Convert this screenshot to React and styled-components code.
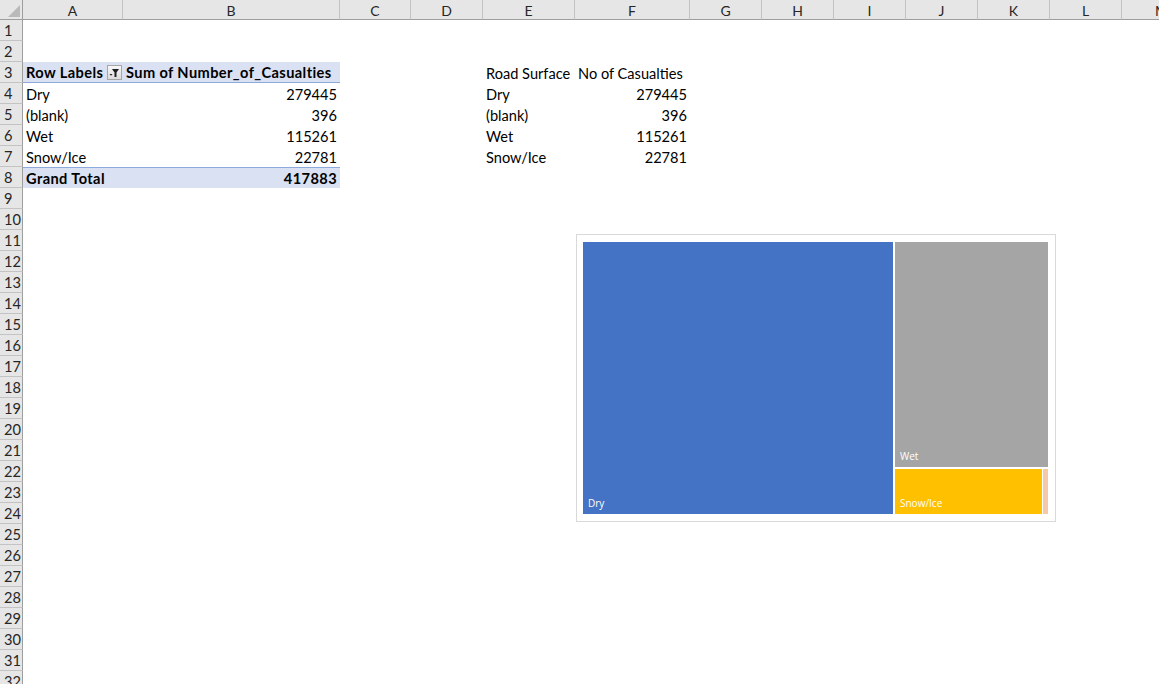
import React from "react";
import styled, { createGlobalStyle, css } from "styled-components";

const GlobalStyle = createGlobalStyle`
    html, body {
        margin: 0;
        padding: 0;
        background: #ffffff;
        overflow: hidden;
    }
    body {
        font-family: Lato, "Liberation Sans", sans-serif;
    }
`;

const COLS = ["A", "B", "C", "D", "E", "F", "G", "H", "I", "J", "K", "L", "M"];
const ROW_COUNT = 33;

const Page = styled.div`
    position: relative;
    width: 1159px;
    height: 684px;
    overflow: hidden;
`;

const Sheet = styled.div`
    display: grid;
    grid-template-columns: 23px 100px 217px 71px 72px 92px 115px 72px 72px 72px 72px 72px 72px 80px;
    grid-template-rows: 20px;
    grid-auto-rows: 21px;
    font-size: 14.6px;
    color: #000;
`;

const Corner = styled.div`
    position: relative;
    background: #e6e6e6;
    border-right: 1px solid #9e9e9e;
    border-bottom: 1px solid #9e9e9e;
    box-sizing: border-box;

    &::after {
        content: "";
        position: absolute;
        right: 2px;
        bottom: 2px;
        width: 0;
        height: 0;
        border-left: 12px solid transparent;
        border-bottom: 12px solid #b9b9b9;
    }
`;

const ColHead = styled.div`
    display: flex;
    align-items: center;
    justify-content: center;
    background: #e6e6e6;
    border-right: 1px solid #c3c3c3;
    border-bottom: 1px solid #9e9e9e;
    box-sizing: border-box;
    font-size: 14px;
    color: #262626;
    padding-top: 1px;
`;

const RowHead = styled.div`
    display: flex;
    align-items: center;
    padding-left: 4px;
    background: #e6e6e6;
    border-right: 1px solid #9e9e9e;
    border-bottom: 1px solid #c3c3c3;
    box-sizing: border-box;
    font-size: 14.6px;
    color: #262626;
`;

const Cell = styled.div`
    display: flex;
    align-items: center;
    justify-content: ${(p) => (p.$align === "right" ? "flex-end" : "space-between")};
    padding: 1px 3px 0 3px;
    box-sizing: border-box;
    white-space: nowrap;
    overflow: visible;
    font-weight: ${(p) => (p.$bold ? 700 : 400)};
    letter-spacing: ${(p) => (p.$bold ? "0.4px" : "0")};
    ${(p) =>
        p.$variant === "pivotHead" &&
        css`
            background: #d9e1f2;
            border-bottom: 1px solid #8ea9db;
        `}
    ${(p) =>
        p.$variant === "pivotTotal" &&
        css`
            background: #d9e1f2;
            border-top: 1px solid #8ea9db;
        `}
`;

const FilterButton = styled.span`
    display: inline-flex;
    align-items: center;
    justify-content: center;
    width: 15px;
    height: 15px;
    margin-right: -2px;
    box-sizing: border-box;
    border: 1px solid #a6a6a6;
    background: linear-gradient(#f7f7f7, #dcdcdc);
`;

const Chart = styled.div`
    position: absolute;
    left: 576px;
    top: 234px;
    width: 480px;
    height: 288px;
    box-sizing: border-box;
    border: 1px solid #d9d9d9;
    background: #ffffff;
    padding: 7px 8px 7px 6px;
    display: flex;
`;

const Plot = styled.div`
    flex: 1;
    display: flex;
    gap: 2px;
`;

const Side = styled.div`
    width: 153px;
    display: flex;
    flex-direction: column;
    gap: 2px;
`;

const Tile = styled.div`
    display: flex;
    align-items: flex-end;
    box-sizing: border-box;
    padding: 0 0 5px 5px;
    background: ${(p) => p.$color};
    width: ${(p) => (p.$w ? `${p.$w}px` : "auto")};
    flex: ${(p) => (p.$grow ? 1 : "none")};
    color: #ffffff;
    font-family: "Open Sans", "Noto Sans", sans-serif;
    font-size: 10px;
    line-height: 12px;
`;

const SnowRow = styled.div`
    display: flex;
    gap: 1px;
    height: 45px;
`;

const FunnelIcon = () => (
    <svg width="11" height="11" viewBox="0 0 11 11">
        <path d="M3 2h7L7.5 5.5V10H5.5V5.5Z" fill="#1f1f1f" />
        <path d="M0.5 7h3L2 8.8Z" fill="#1f1f1f" />
    </svg>
);

const cells = {
    A3: { text: "Row Labels", bold: true, variant: "pivotHead", filter: true },
    B3: { text: "Sum of Number_of_Casualties", bold: true, variant: "pivotHead" },
    A4: { text: "Dry" },
    B4: { text: "279445", align: "right" },
    A5: { text: "(blank)" },
    B5: { text: "396", align: "right" },
    A6: { text: "Wet" },
    B6: { text: "115261", align: "right" },
    A7: { text: "Snow/Ice" },
    B7: { text: "22781", align: "right" },
    A8: { text: "Grand Total", bold: true, variant: "pivotTotal" },
    B8: { text: "417883", bold: true, align: "right", variant: "pivotTotal" },
    E3: { text: "Road Surface" },
    F3: { text: "No of Casualties" },
    E4: { text: "Dry" },
    F4: { text: "279445", align: "right" },
    E5: { text: "(blank)" },
    F5: { text: "396", align: "right" },
    E6: { text: "Wet" },
    F6: { text: "115261", align: "right" },
    E7: { text: "Snow/Ice" },
    F7: { text: "22781", align: "right" },
};

const App = () => {
    const rows = [];
    for (let r = 1; r <= ROW_COUNT; r++) {
        rows.push(<RowHead key={`h${r}`}>{r}</RowHead>);
        COLS.forEach((c) => {
            const d = cells[`${c}${r}`];
            rows.push(
                <Cell
                    key={`${c}${r}`}
                    $align={d?.align}
                    $bold={d?.bold}
                    $variant={d?.variant}
                >
                    {d?.text}
                    {d?.filter && (
                        <FilterButton>
                            <FunnelIcon />
                        </FilterButton>
                    )}
                </Cell>
            );
        });
    }

    return (
        <Page>
            <GlobalStyle />
            <Sheet>
                <Corner />
                {COLS.map((c) => (
                    <ColHead key={c}>{c}</ColHead>
                ))}
                {rows}
            </Sheet>

            <Chart>
                <Plot>
                    <Tile $color="#4472c4" $w={310}>Dry</Tile>
                    <Side>
                        <Tile $color="#a5a5a5" $grow>Wet</Tile>
                        <SnowRow>
                            <Tile $color="#ffc000" $grow>Snow/Ice</Tile>
                            <Tile $color="#f4c9a6" $w={2} />
                        </SnowRow>
                    </Side>
                </Plot>
            </Chart>
        </Page>
    );
};

export default App;
